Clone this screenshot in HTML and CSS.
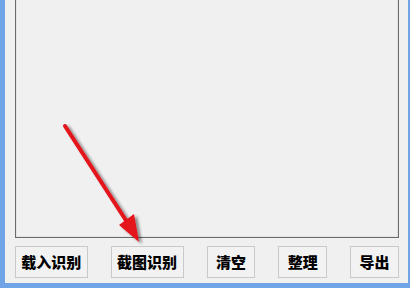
FILE: index.html
```html
<!DOCTYPE html>
<html>
<head>
<meta charset="utf-8">
<link rel="stylesheet" href="styles.css">
</head>
<body>
<div class="window">
  <div class="client">
    <div class="textbox"></div>
    <div class="buttons">
      <button class="btn wide">载入识别</button>
      <button class="btn wide">截图识别</button>
      <button class="btn">清空</button>
      <button class="btn">整理</button>
      <button class="btn">导出</button>
    </div>
  </div>
  <svg class="arrow" width="410" height="288" viewBox="0 0 410 288">
    <defs>
      <filter id="sh" x="-20%" y="-20%" width="140%" height="140%">
        <feGaussianBlur in="SourceAlpha" stdDeviation="1.6"/>
        <feOffset dx="3" dy="2" result="b"/>
        <feComponentTransfer><feFuncA type="linear" slope="0.45"/></feComponentTransfer>
        <feMerge><feMergeNode/><feMergeNode in="SourceGraphic"/></feMerge>
      </filter>
    </defs>
    <g filter="url(#sh)">
      <line x1="65" y1="126" x2="127" y2="222" stroke="#e4121a" stroke-width="4" stroke-linecap="round"/>
      <polygon points="119,225 134,214 139,242" fill="#e4121a"/>
    </g>
  </svg>
</div>
</body>
</html>
```

FILE: styles.css
```css
html, body {
  margin: 0;
  padding: 0;
  background: #f0f0f0;
}
.window {
  position: relative;
  width: 410px;
  height: 288px;
  box-sizing: border-box;
  border-left: 5px solid #6fa5e6;
  border-right: 2px solid #6fa5e6;
  border-bottom: 5px solid #6fa5e6;
  background: #f0f0f0;
  overflow: hidden;
}
.client {
  padding: 0 9px 0 10px;
  display: flex;
  flex-direction: column;
}
.textbox {
  height: 237px;
  border: 1px solid #6a6a6a;
  border-top: none;
  background: #f0f0f0;
  box-shadow: inset 1px 0 0 #e3e3e3, inset -1px 0 0 #e3e3e3, inset 0 -1px 0 #e3e3e3;
}
.buttons {
  margin-top: 8px;
  display: flex;
  gap: 23px;
}
.btn {
  width: 49px;
  height: 32px;
  padding: 0;
  margin: 0;
  border: 1px solid #c9c9c9;
  border-radius: 0;
  background: #f2f2f2;
  font-family: "Noto Sans CJK SC", "Noto Sans CJK JP", sans-serif;
  font-weight: 900;
  font-size: 15px;
  color: #000;
  line-height: 30px;
  letter-spacing: 0;
}
.btn.wide {
  width: 73px;
}
.arrow {
  position: absolute;
  left: -5px;
  top: 0;
  pointer-events: none;
}
```
